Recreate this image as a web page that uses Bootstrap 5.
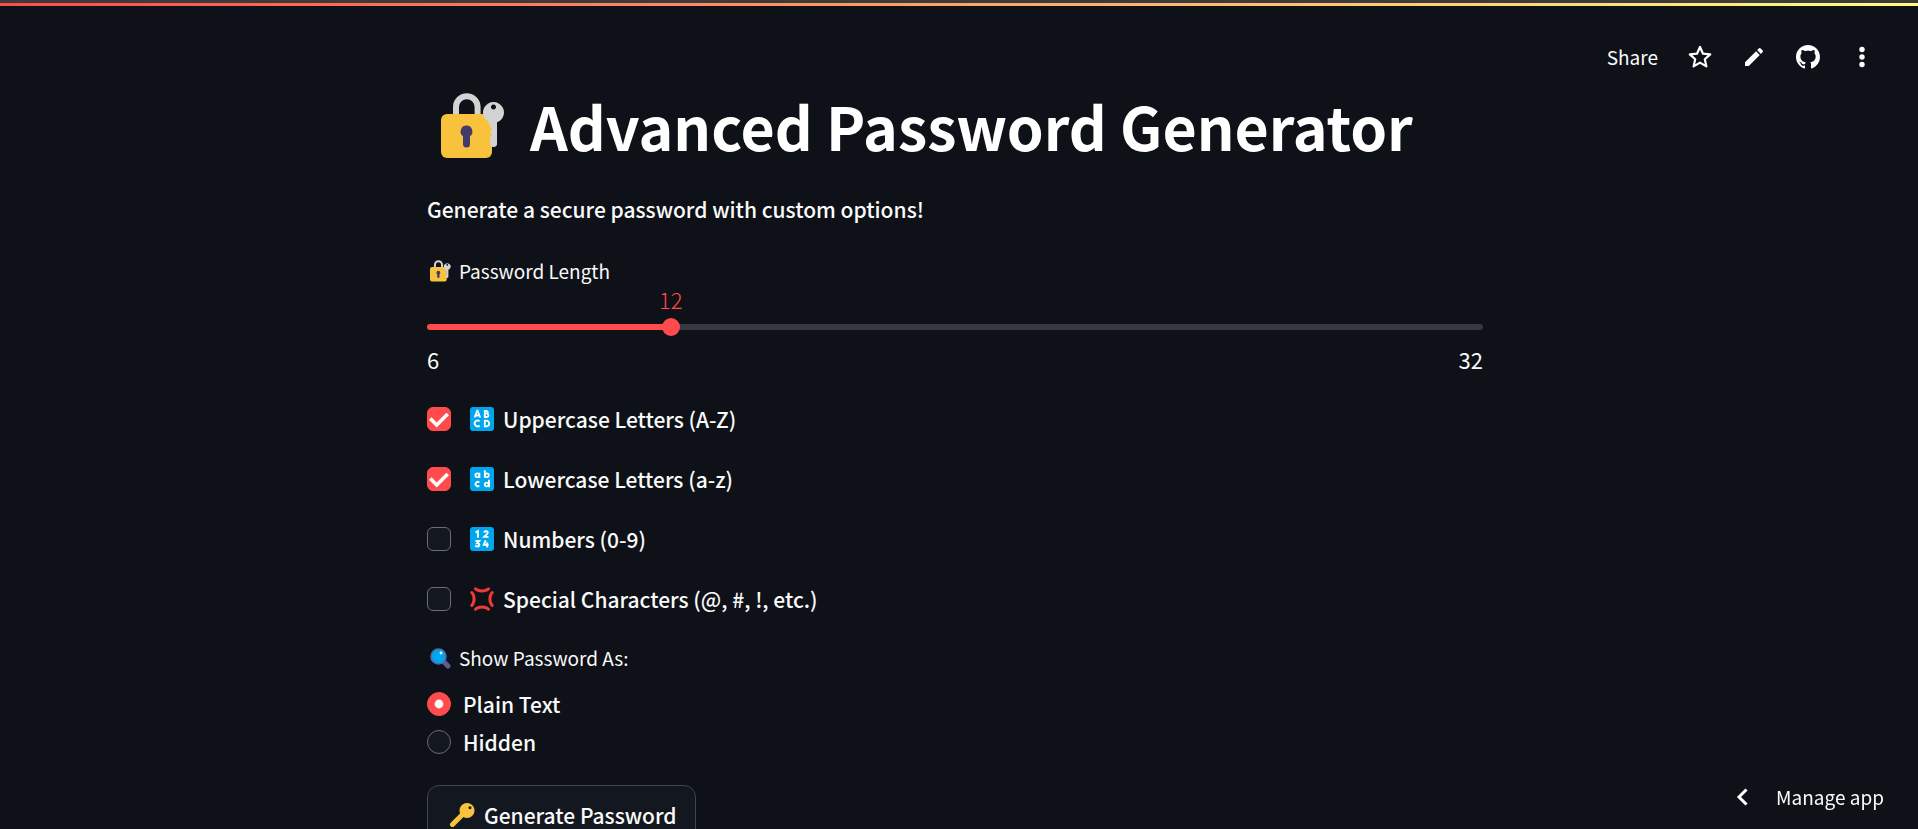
<!DOCTYPE html>
<html lang="en" data-bs-theme="dark">
<head>
<meta charset="utf-8">
<meta name="viewport" content="width=device-width, initial-scale=1">
<title>Advanced Password Generator</title>
<link href="https://cdn.jsdelivr.net/npm/bootstrap@5.3.0/dist/css/bootstrap.min.css" rel="stylesheet">
<style>
:root { --accent: #ff4b4b; --page: #0e1117; --ink: #fafafa; --edge: #6b6d75; }
body { background: var(--page); color: var(--ink); font-family: "Source Sans Pro", "Noto Sans CJK SC", sans-serif; font-size: 21px; line-height: 36px; }
svg { display: block; flex: none; }
.decoration { height: 6px; border-top: 3px solid #3b3a3c; background: linear-gradient(90deg, #ff4b4b, #fffd80); }
.toolbar { padding: 33px 38px 0 0; }
.toolbar nav { gap: 18px; }
.toolbar .tool { color: inherit; width: 36px; height: 36px; }
.tool-text { font-size: 19px; line-height: 36px; color: inherit; }
.scroller { scrollbar-width: none; padding-right: 8px; }
.scroller::-webkit-scrollbar { display: none; }
.app-column { max-width: 1056px; margin: 0 auto; padding: 11px 0 48px; }
.app-title { font-size: 59px; font-weight: 700; line-height: 80px; gap: 25px; padding-left: 14px; margin-bottom: 25px; }
.intro, .pick, .generate { font-weight: 500; }
.intro { margin-bottom: 29px; }
.field-label { font-size: 19px; line-height: 30px; gap: 8px; padding-left: 3px; }
.slider { padding-top: 38px; font-size: 22px; }
.slider-value { color: var(--accent); left: var(--pos); top: -2px; transform: translateX(-50%); font-weight: 300; line-height: 30px; }
.slider-track { height: 6px; border-radius: 3px; background: linear-gradient(90deg, var(--accent) var(--pos), #36393f var(--pos)); }
.slider-track .form-range { width: calc(100% + 18px); margin: 0 -9px; height: 18px; }
.slider-track .form-range::-webkit-slider-runnable-track { background: transparent; height: 18px; }
.slider-track .form-range::-webkit-slider-thumb { background: var(--accent); width: 18px; height: 18px; margin: 0; border: 0; }
.slider-ends { margin-top: 11px; }
.pick { display: flex; align-items: center; min-height: 36px; padding: 0; margin: 0; gap: 12px; }
.pick .form-check-input { float: none; margin: 0; width: 24px; height: 24px; flex: none; background-color: #13171f; border: 1px solid var(--edge); }
.pick .form-check-input[type=checkbox] { border-radius: 6px; }
.pick .form-check-input:checked { background-color: var(--accent); border-color: var(--accent); }
.pick .form-check-input[type=checkbox]:checked { background-image: url("data:image/svg+xml,%3csvg xmlns='http://www.w3.org/2000/svg' viewBox='0 0 24 24'%3e%3cpath fill='none' stroke='%23fafafa' stroke-width='4' d='M2.500 11.500l7 7L21.500 6.500'/%3e%3c/svg%3e"); }
.pick .form-check-input[type=radio]:checked { background-image: url("data:image/svg+xml,%3csvg xmlns='http://www.w3.org/2000/svg' viewBox='0 0 24 24'%3e%3ccircle cx='12' cy='12' r='4.800' fill='%23fafafa'/%3e%3c/svg%3e"); }
.pick label { display: flex; align-items: center; gap: 9px; }
.checks { gap: 24px; }
.checks .pick { gap: 19px; }
.choices { margin-top: 26px; }
.choices legend { margin-bottom: 12px; }
.choices .pick { min-height: 38px; }
.generate { background: #13171f; border: 1px solid #41444c; border-radius: 12px; color: var(--ink); font-size: 21px; line-height: 36px; padding: 11px 18px; gap: 8px; }
.manage { bottom: 14px; right: 34px; gap: 28px; }
</style>
</head>
<body class="vh-100 overflow-hidden d-flex flex-column">
<svg width="0" height="0" class="position-absolute" aria-hidden="true">
  <symbol id="lock" viewBox="0 0 64 66">
    <path d="M15 24V14a10.800 10.800 0 0 1 21.600 0v10" fill="none" stroke="#d3d3d3" stroke-width="6"/>
    <rect y="21" width="51" height="44" rx="6" fill="#f9c23c"/>
    <path d="M47 28h9v22a3.500 3.500 0 0 1-7 1v-6l2-3-2-3 2-3-2-3z" fill="#d3d3d3"/>
    <path fill-rule="evenodd" d="M52.500 9a10.500 10.500 0 1 0 .01 0zM52.500 11.500a2.500 2.500 0 1 1-.01 0z" fill="#d3d3d3"/>
    <path d="M25.500 32.500a6 6 0 0 1 3.500 10.800V51a3.500 3.500 0 0 1-7 0v-7.700a6 6 0 0 1 3.500-10.800z" fill="#433b6b"/>
  </symbol>
</svg>

<div class="decoration flex-shrink-0"></div>
<header class="toolbar d-flex justify-content-end align-items-center">
  <button type="button" class="btn p-0 border-0 tool-text me-4">Share</button>
  <nav class="d-flex" aria-label="App tools">
    <button type="button" class="btn tool p-0 border-0 d-flex align-items-center justify-content-center" aria-label="Star"><svg width="24" height="24" viewBox="0 0 24 24" fill="none" stroke="#fff" stroke-width="2.200" stroke-linejoin="round"><path d="M12 2l3 6.700 7.200.7-5.400 4.800 1.600 7.200L12 17.600l-6.400 3.800 1.600-7.200L1.800 9.400 9 8.700z"/></svg></button>
    <button type="button" class="btn tool p-0 border-0 d-flex align-items-center justify-content-center" aria-label="Edit"><svg width="24" height="24" viewBox="0 0 24 24" fill="#fff"><path d="M3 17.200V21h3.800L17.800 9.900l-3.700-3.700zM20.700 7a1 1 0 0 0 0-1.400l-2.300-2.300a1 1 0 0 0-1.400 0l-1.900 1.800 3.800 3.800z"/></svg></button>
    <button type="button" class="btn tool p-0 border-0 d-flex align-items-center justify-content-center" aria-label="GitHub"><svg width="24" height="24" viewBox="0 0 16 16" fill="#fff"><path d="M8 0C3.580 0 0 3.580 0 8c0 3.540 2.290 6.530 5.470 7.590.4.070.55-.17.55-.38 0-.19-.01-.82-.01-1.490-2.010.37-2.530-.49-2.690-.94-.09-.23-.48-.94-.82-1.130-.28-.15-.68-.52-.01-.53.63-.01 1.080.58 1.230.82.72 1.210 1.870.87 2.330.66.07-.52.28-.87.51-1.070-1.780-.2-3.640-.89-3.640-3.950 0-.87.31-1.590.82-2.150-.08-.2-.36-1.020.08-2.120 0 0 .67-.21 2.200.82.64-.18 1.320-.27 2-.27s1.360.09 2 .27c1.530-1.040 2.200-.82 2.200-.82.44 1.100.16 1.920.08 2.120.51.56.82 1.270.82 2.150 0 3.070-1.870 3.750-3.650 3.950.29.25.54.73.54 1.480 0 1.070-.01 1.930-.01 2.200 0 .21.15.46.55.38A8.010 8.010 0 0 0 16 8c0-4.420-3.580-8-8-8z"/></svg></button>
    <button type="button" class="btn tool p-0 border-0 d-flex align-items-center justify-content-center" aria-label="More options"><svg width="24" height="24" viewBox="0 0 24 24" fill="#fff"><circle cx="12" cy="4.500" r="2.700"/><circle cx="12" cy="12" r="2.700"/><circle cx="12" cy="19.500" r="2.700"/></svg></button>
  </nav>
</header>

<main class="scroller flex-grow-1 overflow-auto">
  <div class="app-column">
    <h1 class="app-title d-flex align-items-center"><svg width="64" height="66" aria-hidden="true"><use href="#lock"/></svg>Advanced Password Generator</h1>
    <p class="intro">Generate a secure password with custom options!</p>

    <label for="length" class="field-label d-flex align-items-center"><svg width="21" height="22" aria-hidden="true"><use href="#lock"/></svg>Password Length</label>
    <div class="slider position-relative" style="--pos:23.077%">
      <output for="length" class="slider-value position-absolute">12</output>
      <div class="slider-track d-flex align-items-center"><input type="range" class="form-range flex-shrink-0" id="length" min="6" max="32" value="12"></div>
      <div class="slider-ends d-flex justify-content-between"><span>6</span><span>32</span></div>
    </div>

    <div class="checks d-flex flex-column mt-4">
      <div class="form-check pick"><input class="form-check-input" type="checkbox" id="upper" checked>
        <label for="upper"><svg width="24" height="24" viewBox="0 0 24 24" aria-hidden="true"><rect width="24" height="24" rx="3" fill="#00a6ed"/><g fill="none" stroke="#fff" stroke-width="1.800"><path d="M4.600 10.500l2.600-6.800h.4l2.600 6.800M5.800 8.500h3.400M14.800 4v6h2.400a1.700 1.700 0 0 0 0-3.300h-2.400 2a1.400 1.400 0 0 0 0-2.700zM9.600 14.300a2.900 2.900 0 1 0 0 4.200M14.800 13.600v5.800h1.400a2.900 2.900 0 0 0 0-5.800z"/></g></svg>Uppercase Letters (A-Z)</label></div>
      <div class="form-check pick"><input class="form-check-input" type="checkbox" id="lower" checked>
        <label for="lower"><svg width="24" height="24" viewBox="0 0 24 24" aria-hidden="true"><rect width="24" height="24" rx="3" fill="#00a6ed"/><g fill="none" stroke="#fff" stroke-width="1.800"><circle cx="7.300" cy="8.300" r="1.900"/><path d="M9.400 5.700v5.300M14.800 3.300v7.500"/><circle cx="16.900" cy="8.300" r="1.900"/><path d="M9.300 15.500a2.200 2.200 0 1 0 0 3.200M19 12.700v7.500"/><circle cx="16.700" cy="17.500" r="1.900"/></g></svg>Lowercase Letters (a-z)</label></div>
      <div class="form-check pick"><input class="form-check-input" type="checkbox" id="numbers">
        <label for="numbers"><svg width="24" height="24" viewBox="0 0 24 24" aria-hidden="true"><rect width="24" height="24" rx="3" fill="#00a6ed"/><g fill="none" stroke="#fff" stroke-width="1.900"><path d="M5.500 5.500l2.400-1.300v6.600M14 5.600c.5-2 4-1.800 3.800.2-.1 1.400-2.500 2.500-3.700 4.100h4.400M5.400 14h3.800l-2 2.200c3 0 2.700 3.300.2 3.300-1 0-1.700-.3-2.200-1M15.700 13.400l-1.900 4.400h4.800M17.200 15.500v5"/></g></svg>Numbers (0-9)</label></div>
      <div class="form-check pick"><input class="form-check-input" type="checkbox" id="special">
        <label for="special"><svg width="24" height="24" viewBox="0 0 24 24" fill="none" stroke="#f03a36" stroke-width="3" stroke-linecap="round" stroke-linejoin="round" aria-hidden="true"><path d="M5.500 1.800c3 3 10 3 13 0M5.500 22.200c3-3 10-3 13 0M1.800 5.500c3 3 3 10 0 13M22.200 5.500c-3 3-3 10 0 13"/></svg>Special Characters (@, #, !, etc.)</label></div>
    </div>

    <fieldset class="choices">
      <legend class="field-label d-flex align-items-center"><svg width="21" height="21" viewBox="0 0 21 21" aria-hidden="true"><path d="M13.500 13.500l4.500 4.500" stroke="#635994" stroke-width="5" stroke-linecap="round"/><circle cx="8.500" cy="8.500" r="7.500" fill="#00a6ed" stroke="#4d6cab" stroke-width="1.600"/><circle cx="11" cy="5" r="1.400" fill="#fff"/></svg>Show Password As:</legend>
      <div class="form-check pick"><input class="form-check-input" type="radio" name="show" id="plain" checked><label for="plain">Plain Text</label></div>
      <div class="form-check pick"><input class="form-check-input" type="radio" name="show" id="hidden"><label for="hidden">Hidden</label></div>
    </fieldset>

    <button type="button" class="btn generate d-inline-flex align-items-center mt-4"><svg width="30" height="24" viewBox="0 0 30 24" aria-hidden="true"><path d="M16 12L6.500 21.500" stroke="#f9c23c" stroke-width="5" stroke-linecap="round"/><path fill-rule="evenodd" fill="#f9c23c" d="M21 0a7.500 7.500 0 1 0 .01 0zM24 3.200a1.500 1.500 0 1 1-.01 0z"/></svg>Generate Password</button>
  </div>
</main>

<button type="button" class="btn p-0 border-0 manage tool-text position-fixed d-flex align-items-center"><svg width="12" height="18" viewBox="0 0 12 18" fill="none" stroke="#fff" stroke-width="3" aria-hidden="true"><path d="M10.500 1.500L3 9l7.500 7.500"/></svg>Manage app</button>
<script src="https://cdn.jsdelivr.net/npm/bootstrap@5.3.0/dist/js/bootstrap.bundle.min.js"></script>
</body>
</html>
